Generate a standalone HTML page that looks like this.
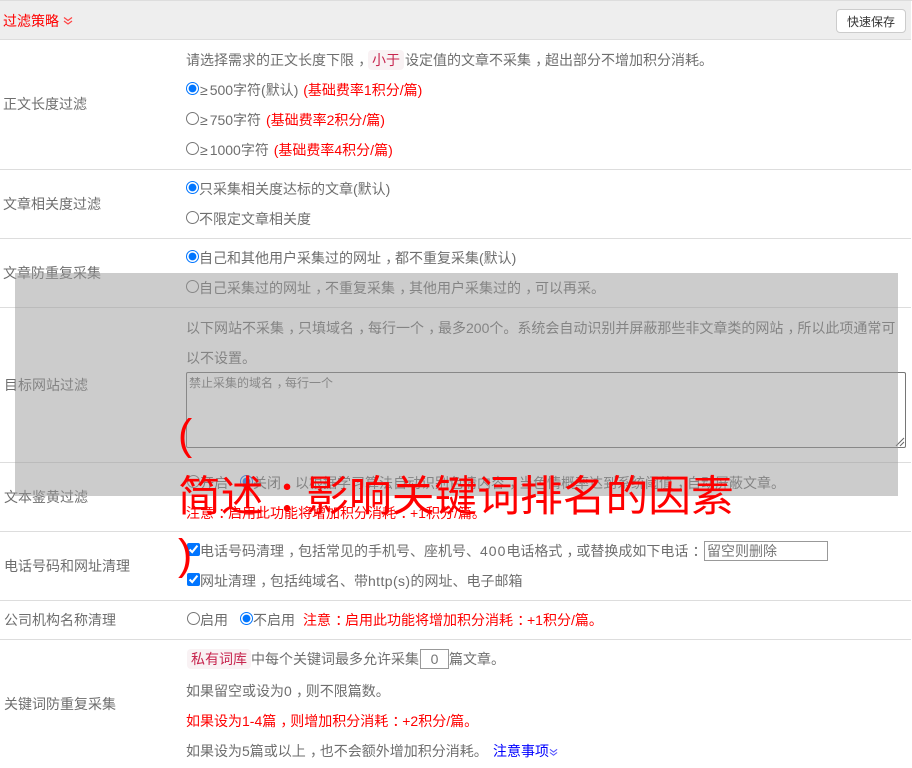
<!DOCTYPE html>
<html lang="zh">
<head>
<meta charset="utf-8">
<style>
html,body{margin:0;padding:0;background:#fff;}
body{width:912px;height:768px;overflow:hidden;position:relative;font-family:"Liberation Sans","Noto Sans CJK SC",sans-serif;font-size:14px;color:#6e6e6e;}
.a{position:absolute;white-space:nowrap;line-height:30px;height:30px;}
.l{left:3px;}
.r{left:186px;}
.hr{position:absolute;left:0;width:911px;height:1px;background:#ddd;}
.red{color:#f00;}
i{font-style:normal;position:relative;left:.3em;}
b{font-weight:400;display:inline-block;padding:0 2px 0 1px;}
input[type=radio],input[type=checkbox]{margin:0;width:13px;height:13px;vertical-align:0;}
code{display:inline-block;height:20px;line-height:20px;font-family:inherit;font-size:14px;color:#c7254e;background:#f9f2f4;border-radius:4px;padding:0 4px;}
.btn{position:absolute;left:836px;top:9px;width:70px;height:24px;box-sizing:border-box;border:1px solid #ccc;border-radius:4px;background:#fff;color:#333;font-size:12px;line-height:24px;text-align:center;}
.ta{position:absolute;left:186px;top:372px;width:720px;height:76px;box-sizing:border-box;border:1px solid #767676;border-radius:2px;color:#757575;font-size:12px;line-height:20px;padding:0 2px;}
.ip{position:absolute;box-sizing:border-box;border:1px solid #999;background:#fff;color:#757575;font-size:14px;}
.ov{position:absolute;left:15px;top:273px;width:883px;height:223px;background:rgba(153,153,153,.5);}
.big{position:absolute;left:178px;color:#f00;font-size:42.75px;line-height:60px;height:60px;white-space:nowrap;}
svg{vertical-align:middle;}
</style>
</head>
<body>
<div class="hr" style="top:0;height:1px;width:912px"></div>
<div style="position:absolute;left:0;top:1px;width:911px;height:38px;background:#eee"></div>
<div class="hr" style="top:39px"></div>
<div class="a l red" style="top:6px;left:3px">过滤策略 <svg width="10" height="10" viewBox="0 0 10 10" style="margin-top:-3px"><path d="M1 1.5 5 4.5 9 1.5M1 5 5 8 9 5" fill="none" stroke="#f44" stroke-width="1.2"/></svg></div>
<div class="btn">快速保存</div>

<div class="a l" style="top:89px">正文长度过滤</div>
<div class="a r" style="top:45px">请选择需求的正文长度下限<i>，</i><code>小于</code><span style="margin-left:1px">设定值的文章不采集<i>，</i>超出部分不增加积分消耗。</span></div>
<div class="a r" style="top:75px"><input type="radio" name="a" checked><b>≥</b>500字符(默认) <span class="red" style="margin-left:1px">(基础费率1积分/篇)</span></div>
<div class="a r" style="top:105px"><input type="radio" name="a"><b>≥</b>750字符 <span class="red" style="margin-left:1px">(基础费率2积分/篇)</span></div>
<div class="a r" style="top:135px"><input type="radio" name="a"><b>≥</b>1000字符 <span class="red" style="margin-left:1px">(基础费率4积分/篇)</span></div>
<div class="hr" style="top:169px"></div>

<div class="a l" style="top:189px">文章相关度过滤</div>
<div class="a r" style="top:174px"><input type="radio" name="b" checked>只采集相关度达标的文章(默认)</div>
<div class="a r" style="top:204px"><input type="radio" name="b">不限定文章相关度</div>
<div class="hr" style="top:238px"></div>

<div class="a l" style="top:258px">文章防重复采集</div>
<div class="a r" style="top:243px"><input type="radio" name="c" checked>自己和其他用户采集过的网址<i>，</i>都不重复采集(默认)</div>
<div class="a r" style="top:273px"><input type="radio" name="c">自己采集过的网址<i>，</i>不重复采集<i>，</i>其他用户采集过的<i>，</i>可以再采。</div>
<div class="hr" style="top:307px"></div>

<div class="a l" style="top:370px;left:4px">目标网站过滤</div>
<div class="a r" style="top:313px">以下网站不采集<i>，</i>只填域名<i>，</i>每行一个<i>，</i>最多200个。系统会自动识别并屏蔽那些非文章类的网站<i>，</i>所以此项通常可</div>
<div class="a r" style="top:343px">以不设置。</div>
<div class="ta">禁止采集的域名<i>，</i>每行一个<svg width="10" height="10" viewBox="0 0 10 10" style="position:absolute;right:0;bottom:0"><path d="M1 9 9 1M5 9 9 5" stroke="#666" stroke-width="1"/></svg></div>
<div class="hr" style="top:462px"></div>

<div class="a l" style="top:482px;left:4px">文本鉴黄过滤</div>
<div class="a" style="top:468px;left:187px"><input type="radio" name="d">开启</div>
<div class="a" style="top:468px;left:240px"><input type="radio" name="d" checked>关闭<i>，</i>以根据学习算法自动识别色情内容<i>，</i>当色情概率达到系统阈值<i>，</i>自动屏蔽文章。</div>
<div class="a r red" style="top:498px">注意<i>：</i>启用此功能将增加积分消耗<i>：</i>+1积分/篇。</div>
<div class="hr" style="top:531px"></div>

<div class="a l" style="top:551px;left:4px">电话号码和网址清理</div>
<div class="a" style="top:536px;left:187px"><input type="checkbox" checked>电话号码清理<i>，</i>包括常见的手机号、座机号、<span style="letter-spacing:1px">400</span>电话格式<i>，</i>或替换成如下电话<i>：</i></div>
<div class="ip" style="left:704px;top:541px;width:124px;height:20px;line-height:18px;padding-left:2px">留空则删除</div>
<div class="a" style="top:566px;left:187px"><input type="checkbox" checked>网址清理<i>，</i>包括纯域名、带<span style="letter-spacing:.4px">http(s)</span>的网址、电子邮箱</div>
<div class="hr" style="top:600px"></div>

<div class="a l" style="top:605px;left:4px">公司机构名称清理</div>
<div class="a" style="top:605px;left:187px"><input type="radio" name="e">启用</div>
<div class="a" style="top:605px;left:240px"><input type="radio" name="e" checked>不启用</div>
<div class="a red" style="top:605px;left:303px">注意<i>：</i>启用此功能将增加积分消耗<i>：</i>+1积分/篇。</div>
<div class="hr" style="top:639px"></div>

<div class="a l" style="top:689px;left:4px">关键词防重复采集</div>
<div class="a" style="top:644px;left:187px"><code>私有词库</code>中每个关键词最多允许采集</div>
<div class="ip" style="left:420px;top:649px;width:29px;height:20px;line-height:18px;text-align:center">0</div>
<div class="a" style="top:644px;left:449px">篇文章。</div>
<div class="a r" style="top:676px">如果留空或设为0<i>，</i>则不限篇数。</div>
<div class="a r red" style="top:706px">如果设为1-4篇<i>，</i>则增加积分消耗<i>：</i>+2积分/篇。</div>
<div class="a r" style="top:736px">如果设为5篇或以上<i>，</i>也不会额外增加积分消耗。</div>
<div class="a" style="top:736px;left:493px;color:#00f">注意事项<svg width="9" height="9" viewBox="0 0 10 10"><path d="M1 1.5 5 4.5 9 1.5M1 5 5 8 9 5" fill="none" stroke="#55f" stroke-width="1.2"/></svg></div>

<div class="ov"></div>
<div class="big" style="top:405px">(</div>
<div class="big" style="top:467px">简述<i>：</i>影响关键词排名的因素</div>
<div class="big" style="top:525px">)</div>
</body>
</html>
